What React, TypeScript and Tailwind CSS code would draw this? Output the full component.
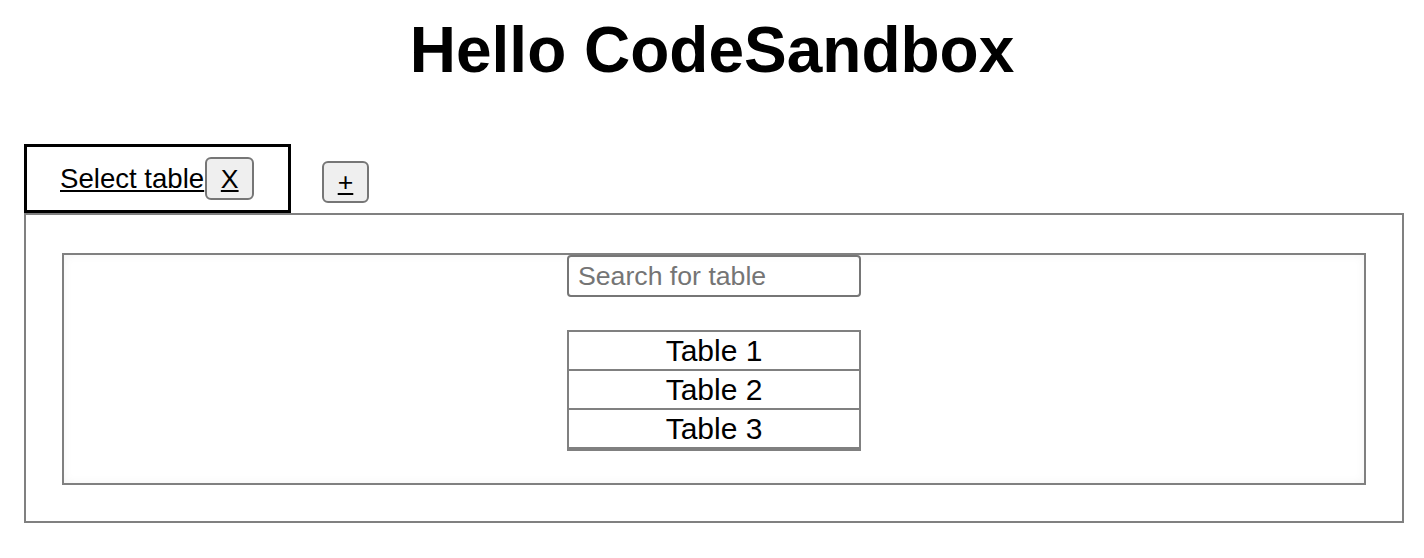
import { useState } from 'react';

const tables = ['Table 1', 'Table 2', 'Table 3'];

export default function App() {
  const [query, setQuery] = useState('');
  const shown = tables.filter((t) => t.toLowerCase().includes(query.toLowerCase()));

  return (
    <div className="min-h-screen bg-white text-black font-['Liberation_Sans',Arial,sans-serif]">
      <h1 className="mt-[18px] mb-[62px] text-center text-[64px] font-bold leading-none">
        Hello CodeSandbox
      </h1>

      {/* tabs */}
      <div className="ml-[24px] flex items-end">
        <div className="flex h-[69px] w-[267px] shrink-0 items-center border-[3px] border-black pl-[33px]">
          <span className="whitespace-nowrap text-[27.6px] underline">Select table</span>
          <button className="ml-px flex h-[43px] w-[49px] shrink-0 items-center justify-center rounded-[6px] border-2 border-[#767676] bg-[#efefef] text-[26.67px] underline">
            X
          </button>
        </div>
        <button className="mb-[10px] ml-[31px] flex h-[42px] w-[47px] shrink-0 items-center justify-center rounded-[6px] border-2 border-[#767676] bg-[#efefef] text-[26.67px] underline">
          +
        </button>
      </div>

      {/* panel */}
      <div className="ml-[24px] w-[1380px] border-2 border-[#808080] px-[36px] pt-[38px] pb-[36px]">
        <div className="flex flex-col items-center border-2 border-[#808080] pb-[32px] shadow-[inset_0_0_10px_rgba(0,0,0,0.05)]">
          <input
            value={query}
            onChange={(e) => setQuery(e.target.value)}
            placeholder="Search for table"
            className="h-[42px] w-[294px] rounded-[4px] border-2 border-[#767676] px-[9px] text-[26.67px] placeholder:text-[#757575] outline-none"
          />
          <ul className="mt-[33px] w-[294px] border-2 border-b-4 border-[#808080]">
            {shown.map((t, i) => (
              <li
                key={t}
                className={
                  'text-center text-[30px] leading-[37px] ' +
                  (i < shown.length - 1 ? 'border-b-2 border-[#808080]' : '')
                }
              >
                {t}
              </li>
            ))}
          </ul>
        </div>
      </div>
    </div>
  );
}
